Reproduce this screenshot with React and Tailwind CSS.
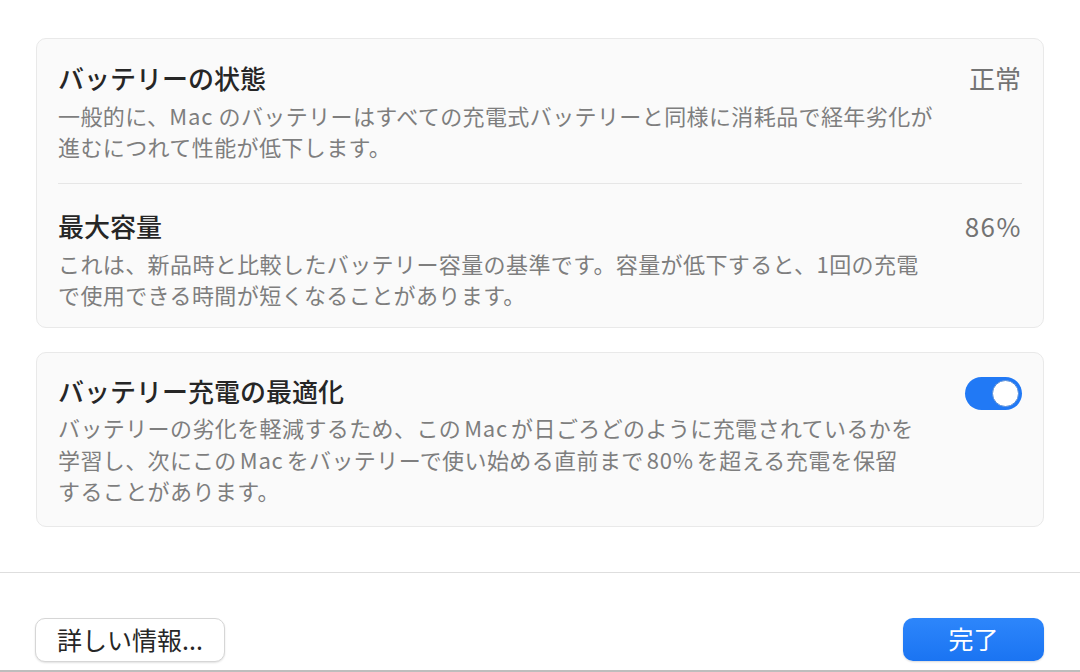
import React from "react";

const font = { fontFamily: '"Noto Sans CJK JP", "Noto Sans", sans-serif' };

function L({ children }) {
  return <span className="mx-[3px] tracking-[0.8px]">{children}</span>;
}

function Row({ title, lines, right, className = "" }) {
  return (
    <div className={"flex justify-between items-start " + className}>
      <div>
        <div className="text-[26px] leading-[32px] font-medium text-[#262626] whitespace-nowrap">{title}</div>
        <div className="mt-[6px] text-[22px] tracking-[0.4px] leading-[31px] text-[#7e7e7e] whitespace-nowrap">
          {lines.map((l, i) => (
            <div key={i}>{l}</div>
          ))}
        </div>
      </div>
      {right}
    </div>
  );
}

export default function App() {
  return (
    <div className="w-[1080px] h-[672px] bg-white flex flex-col overflow-hidden" style={font}>
      <div className="mx-[36px] mt-[38px] rounded-[10px] border border-[#e9e9e9] bg-[#fafafa] px-[21px]">
        <Row
          className="pt-[23px] pb-[21px]"
          title="バッテリーの状態"
          lines={[
            <>一般的に、<span className="tracking-[0.8px]">Mac</span> のバッテリーはすべての充電式バッテリーと同様に消耗品で経年劣化が</>,
            "進むにつれて性能が低下します。",
          ]}
          right={<div className="text-[26px] leading-[32px] text-[#737373] pr-[1px]">正常</div>}
        />
        <div className="h-px bg-[#e6e6e6]" />
        <Row
          className="pt-[26px] pb-[17px]"
          title="最大容量"
          lines={[
            "これは、新品時と比較したバッテリー容量の基準です。容量が低下すると、1回の充電",
            "で使用できる時間が短くなることがあります。",
          ]}
          right={<div className="text-[26px] tracking-[1.5px] leading-[32px] text-[#737373]">86%</div>}
        />
      </div>

      <div className="mx-[36px] mt-[24px] rounded-[10px] border border-[#e9e9e9] bg-[#fafafa] px-[21px] pt-[22px] pb-[19px]">
        <div className="flex justify-between items-start">
          <div>
            <div className="text-[26px] leading-[32px] font-medium text-[#262626] whitespace-nowrap">バッテリー充電の最適化</div>
            <div className="mt-[5px] text-[22px] tracking-[0.4px] leading-[31.5px] text-[#7e7e7e] whitespace-nowrap">
              <div>バッテリーの劣化を軽減するため、この<L>Mac</L>が日ごろどのように充電されているかを</div>
              <div>学習し、次にこの<L>Mac</L>をバッテリーで使い始める直前まで<L>80%</L>を超える充電を保留</div>
              <div>することがあります。</div>
            </div>
          </div>
          <div className="mt-[2px] w-[57px] h-[33px] rounded-full bg-[#2179f5] flex items-center justify-end pr-[3px] shrink-0">
            <div className="w-[27px] h-[27px] rounded-full bg-white border border-[#5a8fd8]" />
          </div>
        </div>
      </div>

      <div className="mt-[45px] h-px bg-[#dedede]" />

      <div className="flex justify-between items-start px-[35px] mt-[45px]">
        <div className="w-[190px] h-[44px] rounded-[10px] bg-white border border-[#d6d6d6] shadow-[0_1px_2px_rgba(0,0,0,0.12)] flex items-center justify-center text-[25px] text-[#262626]">
          詳しい情報...
        </div>
        <div className="w-[141px] h-[43px] mr-[1px] rounded-[10px] bg-gradient-to-b from-[#2d86fb] to-[#1a74f2] shadow-[0_1px_2px_rgba(0,0,0,0.15)] flex items-center justify-center text-[25px] text-white">
          完了
        </div>
      </div>

      <div className="flex-1" />
      <div className="h-[2px] bg-[#bdbdbd]" />
    </div>
  );
}
